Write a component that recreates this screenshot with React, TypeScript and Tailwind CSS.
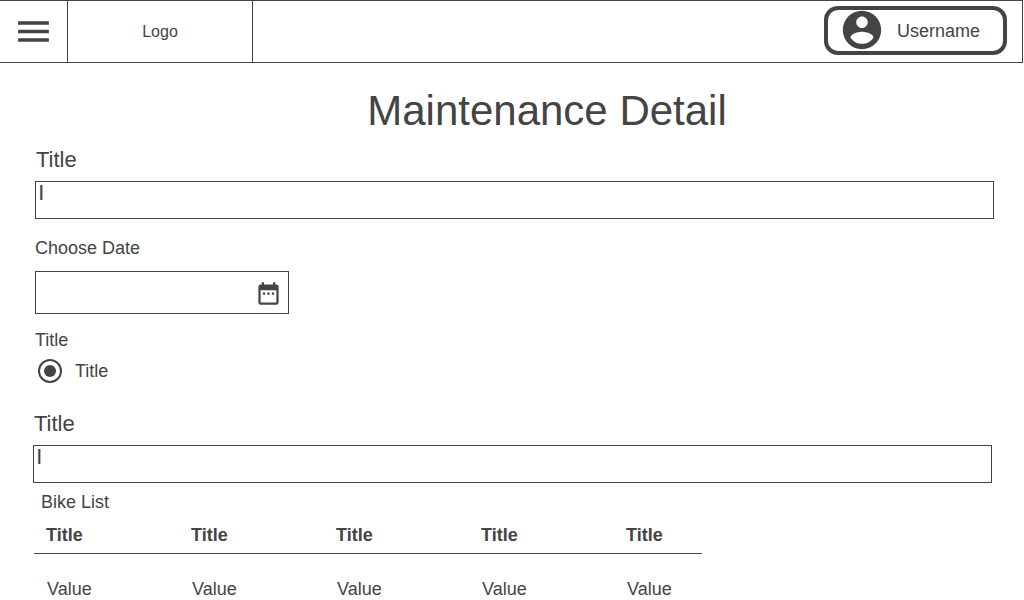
type FieldProps = { id: string; label: string };

function TextField({ id, label }: FieldProps) {
  return (
    <div className="flex flex-col">
      <label htmlFor={id} className="pl-px text-[22px] leading-7">
        {label}
      </label>
      <input
        id={id}
        type="text"
        defaultValue="|"
        className="mt-[7px] h-[38px] w-full border border-[#444] bg-white px-[3px] pb-[17px] text-base leading-5 font-bold outline-none"
      />
    </div>
  );
}

function MenuIcon() {
  return (
    <svg viewBox="0 0 24 24" className="size-[41px]" fill="currentColor" aria-hidden="true">
      <path d="M3 18h18v-2H3v2zm0-5h18v-2H3v2zm0-7v2h18V6H3z" />
    </svg>
  );
}

function AccountIcon() {
  return (
    <svg viewBox="0 0 24 24" className="mb-0.5 size-[46px] shrink-0" fill="currentColor" aria-hidden="true">
      <path d="M12 2C6.48 2 2 6.48 2 12s4.48 10 10 10 10-4.48 10-10S17.52 2 12 2zm0 3c1.66 0 3 1.34 3 3s-1.34 3-3 3-3-1.34-3-3 1.34-3 3-3zm0 14.2c-2.5 0-4.71-1.28-6-3.22.03-1.99 4-3.08 6-3.08 1.99 0 5.97 1.09 6 3.08-1.29 1.94-3.5 3.22-6 3.22z" />
    </svg>
  );
}

function CalendarIcon() {
  return (
    <svg viewBox="0 0 24 24" className="mt-0.5 size-[27px]" fill="currentColor" aria-hidden="true">
      <path d="M9 11H7v2h2v-2zm4 0h-2v2h2v-2zm4 0h-2v2h2v-2zm2-7h-1V2h-2v2H8V2H6v2H5c-1.11 0-1.99.9-1.99 2L3 20c0 1.1.89 2 2 2h14c1.1 0 2-.9 2-2V6c0-1.1-.9-2-2-2zm0 16H5V9h14v11z" />
    </svg>
  );
}

const columns = [0, 1, 2, 3, 4];

export default function App() {
  return (
    <div className="bg-white font-['Liberation_Sans',Arial,sans-serif] text-lg leading-6 text-[#444]">
      <header className="mr-px flex h-[63px] items-stretch border-y border-r border-[#444]">
        <button type="button" aria-label="Menu" className="flex w-[68px] items-center justify-center border-r border-[#444]">
          <MenuIcon />
        </button>
        <a href="#" className="flex w-[185px] items-center justify-center border-r border-[#444] text-base">
          Logo
        </a>
        <div className="ml-auto flex items-start pt-[5px] pr-[15px]">
          <button
            type="button"
            className="flex h-[49px] w-[183px] items-center gap-3 rounded-[14px] border-4 border-[#444] pl-[11px]"
          >
            <AccountIcon />
            Username
          </button>
        </div>
      </header>

      <main>
        <h1 className="mt-6 pl-[70px] text-center text-[42px] leading-12">Maintenance Detail</h1>

        <form className="mt-[11px] pr-[30px] pl-[35px]">
          <TextField id="title" label="Title" />

          <div className="mt-[17px] flex flex-col items-start">
            <label htmlFor="date">Choose Date</label>
            <div className="mt-[11px] flex h-[43px] w-[254px] items-center border border-[#444] pr-[6px]">
              <input id="date" type="text" className="h-full min-w-0 flex-1 px-2 outline-none" />
              <button type="button" aria-label="Open calendar">
                <CalendarIcon />
              </button>
            </div>
          </div>

          <fieldset className="mt-[14px]">
            <legend>Title</legend>
            <label className="mt-[7px] flex items-center gap-[13px] pl-[3px]">
              <input
                type="radio"
                name="option"
                defaultChecked
                className="flex size-6 appearance-none items-center justify-center rounded-full border-2 border-[#444] before:size-3 before:rounded-full checked:before:bg-[#444]"
              />
              Title
            </label>
          </fieldset>
        </form>

        <section className="mt-[27px] pr-8 pl-[33px]">
          <TextField id="subtitle" label="Title" />
          <h2 className="mt-[7px] pl-2">Bike List</h2>
          <table className="ml-px w-[668px] table-fixed border-collapse text-left">
            <colgroup>
              <col className="w-[145px]" />
              <col className="w-[145px]" />
              <col className="w-[145px]" />
              <col className="w-[145px]" />
              <col />
            </colgroup>
            <thead>
              <tr className="border-b border-[#444]">
                {columns.map((c) => (
                  <th key={c} scope="col" className="pt-[9px] pb-[6px] pl-3 font-bold">
                    Title
                  </th>
                ))}
              </tr>
            </thead>
            <tbody>
              <tr>
                {columns.map((c) => (
                  <td key={c} className="pt-[23px] pl-[13px]">
                    Value
                  </td>
                ))}
              </tr>
            </tbody>
          </table>
        </section>
      </main>
    </div>
  );
}
